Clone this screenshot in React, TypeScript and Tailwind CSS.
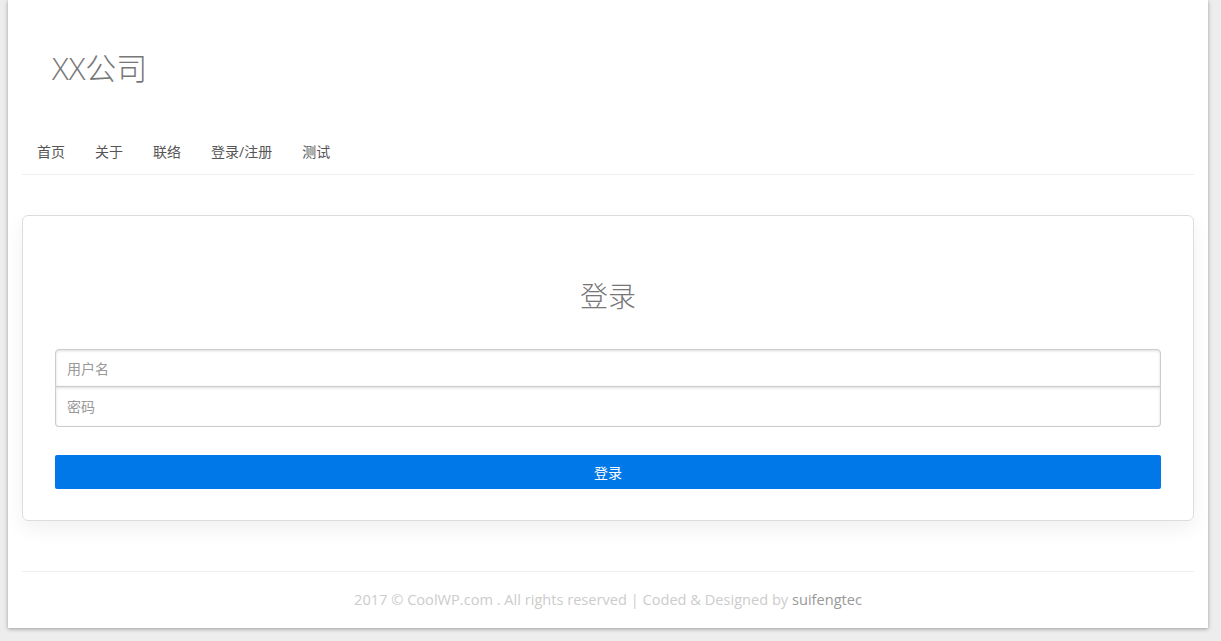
export default function App() {
  const nav = ['首页', '关于', '联络', '登录/注册', '测试']

  return (
    <div
      className="min-h-screen bg-[#ededed] pb-[13px]"
      style={{ fontFamily: '"Open Sans", "Noto Sans CJK SC", sans-serif' }}
    >
      <div className="ml-[8px] w-[1200px] bg-white px-[14px] shadow-[0_1px_4px_rgba(0,0,0,0.35)]">
        {/* header */}
        <div className="flex h-[131px] items-start pt-[47px] pl-[30px]">
          <h1 className="text-[31px] font-light leading-[42px] text-[#777]">XX公司</h1>
        </div>

        {/* nav */}
        <ul className="flex h-[44px] items-center border-b border-[#eee] pb-[2px]">
          {nav.map(item => (
            <li key={item} className="px-[15px] text-[14px] text-[#555]">
              {item}
            </li>
          ))}
        </ul>

        {/* login card */}
        <div className="mt-[40px] rounded-[6px] border border-[#ddd] px-[32px] pt-[60px] pb-[31px] shadow-[0_8px_20px_rgba(0,0,0,0.06)]">
          <h2 className="text-center text-[28px] font-light leading-[40px] text-[#777]">登录</h2>
          <form className="mt-[33px]" onSubmit={e => e.preventDefault()}>
            <div className="flex flex-col">
              <input
                className="h-[38px] rounded-t-[4px] border border-[#ccc] px-[11px] text-[14px] text-[#555] shadow-[inset_0_1px_3px_#ddd] outline-none placeholder:text-[#999]"
                placeholder="用户名"
              />
              <input
                type="password"
                className="h-[40px] rounded-b-[4px] border border-t-0 border-[#ccc] px-[11px] text-[14px] text-[#555] shadow-[inset_0_1px_3px_#ddd] outline-none placeholder:text-[#999]"
                placeholder="密码"
              />
            </div>
            <button
              type="submit"
              className="mt-[28px] h-[34px] w-full rounded-[2px] bg-[#0078e7] text-[14px] text-white"
            >
              登录
            </button>
          </form>
        </div>

        {/* footer */}
        <div className="mt-[50px] flex h-[57px] items-center justify-center border-t border-[#eee] text-[14.6px] text-[#ccc]">
          <span>
            2017 © CoolWP.com . All rights reserved | Coded &amp; Designed by{' '}
            <a className="text-[#999]">suifengtec</a>
          </span>
        </div>
      </div>
    </div>
  )
}
